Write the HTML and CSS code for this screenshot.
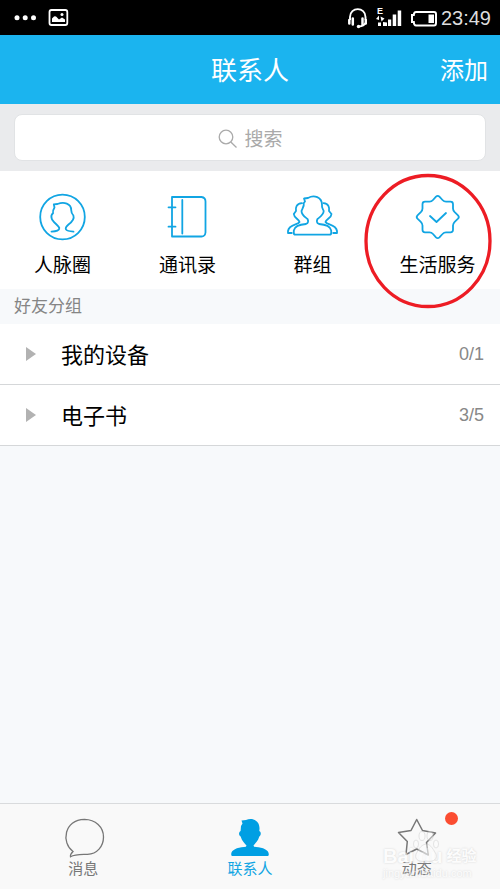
FILE: index.html
```html
<!DOCTYPE html>
<html lang="zh-CN">
<head>
<meta charset="utf-8">
<meta name="viewport" content="width=device-width, initial-scale=1">
<title>联系人</title>
<link rel="stylesheet" href="styles.css">
</head>
<body>
<div class="status">
  <svg class="status-left" width="60" height="20" viewBox="12 8 60 20" aria-hidden="true">
    <g fill="#fff"><circle cx="17" cy="17.7" r="2.5"/><circle cx="25.2" cy="17.7" r="2.5"/><circle cx="33.5" cy="17.7" r="2.5"/></g>
    <rect x="49.5" y="10" width="17.8" height="15" rx="2" fill="none" stroke="#fff" stroke-width="1.8"/>
    <path d="M52 22V18.5L54 16.5Q56 15.5 57.5 18L59 19.5L62 17.5L65 19.5V22Z" fill="#fff"/><circle cx="62" cy="14.5" r="1.5" fill="#fff"/>
  </svg>
  <div class="status-right">
    <svg width="20" height="22" viewBox="347 7 20 22" fill="none" stroke="#fff" aria-hidden="true">
      <path d="M350 20V17C350 6.500 365.500 6.500 365.500 17V20M365.500 23Q364 26 359 26.500" stroke-width="1.900"/>
      <path d="M349.300 20V23.500M352.800 18.500V24.500M362.500 18.500V24.500M365.800 20V23.500" stroke-width="2.500" stroke-linecap="round"/>
      <circle cx="358.500" cy="26.500" r="1.700" fill="#fff" stroke="none"/>
    </svg>
    <span class="signal"><span class="network">E</span>
      <svg width="27" height="22" viewBox="375 7 27 22" fill="#fff" aria-hidden="true">
        <path d="M376 19L379 15.500V20ZM380.500 16.500L384.500 18.500L381.500 21.500ZM378 22.500H381V26H378ZM383 22L387 22.500V26H383ZM388 19.500H391.200V26H388ZM392.700 14.500H396.200V26H392.700ZM397.700 10.500H401.200V26H397.700Z"/>
      </svg>
    </span>
    <svg width="28" height="22" viewBox="409 7 28 22" aria-hidden="true">
      <path d="M415 12H433Q435 12 435 14V23Q435 25.500 433 25.500H415Q413 25.500 412.800 22H411V15H412.800Q413 12 415 12Z" fill="none" stroke="#fff" stroke-width="2"/>
      <path d="M427.500 14.500H433V23H427.500Z" fill="#fff"/>
    </svg>
    <time class="clock">23:49</time>
  </div>
</div>
<header class="header">
  <h1 class="title">联系人</h1>
  <button class="add" type="button">添加</button>
</header>
<main class="content">
  <div class="search-band">
    <label class="search">
      <svg width="20" height="20" viewBox="0 0 20 20" fill="none" stroke="#aaa" stroke-width="1.300" aria-hidden="true"><circle cx="8" cy="8" r="6.800"/><path d="M12.800 13L18.500 18.500"/></svg>
      <input class="search-input" type="text" placeholder="搜索" aria-label="搜索">
    </label>
  </div>
  <nav class="shortcuts">
    <a class="shortcut" href="#">
      <svg class="shortcut-icon" viewBox="36 190 54 54" aria-hidden="true"><circle cx="62.500" cy="217" r="22.300"/><path d="M51.500 231.600C56.500 231.500 59.500 230.500 59.300 228C58.800 225.500 52.500 222 51.700 218.500C50.800 216 51.500 214.500 53 213.300C52.700 210.500 53.500 209 54.500 207.500L53.800 204.300L57.500 204C64 201.500 71.200 203.500 71.200 210Q71.200 213 73.400 215.500C74.500 218.500 72.500 221.500 68.500 224.500C64 228.500 64.500 231.300 73.500 231.600"/></svg>
      人脉圈
    </a>
    <a class="shortcut" href="#">
      <svg class="shortcut-icon" viewBox="161 190 54 54" aria-hidden="true"><path d="M172 197H201.500Q205.500 197.500 205.500 201.500V232.500Q205 236.500 201.500 236.500H172ZM182.300 200V233.500M168.500 207.300H175.500M168.500 226.700H175.500"/></svg>
      通讯录
    </a>
    <a class="shortcut" href="#">
      <svg class="shortcut-icon" viewBox="286 190 54 54" aria-hidden="true"><path d="M304 198.500L308 198C314 194.500 322 197 322 205C321.500 208 323 209 323.700 211C323.500 215 320 217 317.500 219C316.500 221 316.500 223 319 224C326 224.500 330.500 226.500 331.200 230.500V233Q331.200 234.700 329.500 234.700H295.500Q293.800 234.700 293.800 233V230.500C294.500 226.500 299 224.500 306 224C308.500 223 308.500 221 307.500 219C305 217 301.500 215 301.500 211C302 209 304.500 206 303.800 203L305 201.500Z"/><path d="M302 203.200C296 203.500 295.500 208 296 211L293.800 214C294 218 299 219 299.500 222C298 225 289 224 288 231V233H291.800"/><path d="M323.500 203.200C329 203.500 329.500 208 329 211L331.500 214C331.500 218 326 219 325.500 222C327 225 336 224 337 231V233H333.200"/></svg>
      群组
    </a>
    <a class="shortcut" href="#">
      <svg class="shortcut-icon" viewBox="411 190 54 54" aria-hidden="true"><path d="M436 196.700Q437.700 195 439.400 196.700L442.500 200Q444 201.700 446 201.700H450.500Q453 201.700 453 204.200V208.500Q453 210.500 454.700 212.200L458 215.300Q459.700 217 458 218.700L454.700 221.800Q453 223.500 453 225.500V229.800Q453 232.300 450.500 232.300H446Q444 232.300 442.500 234L439.400 237.300Q437.700 239 436 237.300L433 234Q431.500 232.300 429.500 232.300H425Q422.500 232.300 422.500 229.800V225.500Q422.500 223.500 420.800 221.800L417.500 218.700Q415.800 217 417.500 215.300L420.800 212.200Q422.500 210.500 422.500 208.500V204.200Q422.500 201.700 425 201.700H429.500Q431.500 201.700 433 200Z"/><path d="M430 216L436.500 222L446 213"/></svg>
      生活服务
    </a>
    <svg class="highlight" width="128" height="136" viewBox="0 0 128 136" fill="none" aria-hidden="true"><ellipse cx="64" cy="68" rx="62" ry="65.500" stroke="#ed1c24" stroke-width="3.300"/></svg>
  </nav>
  <h2 class="section">好友分组</h2>
  <ul class="groups">
    <li><button class="group" type="button"><span class="arrow"></span><span class="group-name">我的设备</span><span class="count">0/1</span></button></li>
    <li><button class="group" type="button"><span class="arrow"></span><span class="group-name">电子书</span><span class="count">3/5</span></button></li>
  </ul>
</main>
<nav class="tabs">
  <a class="tab" href="#">
    <svg class="tab-icon" viewBox="61 816 44 44" fill="none" stroke="#777" stroke-width="1.300" aria-hidden="true"><path d="M73 851.500C61 843 64 819.500 84.500 819.300C95.500 819.500 103.500 827 103.500 837C103.500 846.500 97 854 87.500 854.300C80 854.500 75 854 70.500 856.800Q70 854.500 73 851.500Z"/></svg>
    消息
  </a>
  <a class="tab tab-current" href="#" aria-current="page">
    <svg class="tab-icon" viewBox="228 816 44 44" fill="#009fe3" aria-hidden="true"><path d="M241.500 820.500L246 820C252 817.500 260 820 259.500 829L259.300 831C261.500 832 261 835.500 259.300 836.500C258 841 256 842.500 253.500 845.500Q253.500 847 256 847C263 847.500 269 850 268.800 854.500Q268.700 856 267.500 856H232.500Q231.200 856 231.200 854.500C231 850 237 847.500 244 847Q246.500 847 246.500 845.500C244 842.500 242 841 240.700 836.500C238.500 835 238.500 832.500 240.600 831L241 826L242.500 823.500Z"/></svg>
    联系人
  </a>
  <a class="tab" href="#">
    <svg class="tab-icon" viewBox="395 816 44 44" fill="none" stroke="#777" stroke-width="1.500" stroke-linejoin="round" aria-hidden="true"><path d="M416.700 819.500L422.500 830.500L435.500 833L426.500 842.500L428.300 855L416.700 849L406 854.500L407.300 841.500L398.500 832.500L411 830.500Z"/></svg>
    动态
    <span class="dot"></span>
  </a>
  <div class="watermark" aria-hidden="true">
    <svg class="paw" width="28" height="32" viewBox="0 0 28 32"><ellipse cx="10" cy="5" rx="3" ry="4.500"/><ellipse cx="18" cy="5" rx="3" ry="4.500"/><ellipse cx="4" cy="13" rx="2.500" ry="4"/><ellipse cx="24" cy="13" rx="2.500" ry="4"/><path d="M14 13C8 14 6 20 4 23C2 30 9 31 14 30C19 31 26 30 24 23C22 20 19 13 14 13Z"/></svg>
    <div class="mark-brand"><span>Bai</span><span>du</span><span class="mark-cn">经验</span></div>
    <div class="mark-site">jingyan.baidu.com</div>
  </div>
</nav>
</body>
</html>
```

FILE: styles.css
```css
* { box-sizing: border-box; }

body {
  margin: 0;
  min-height: 100vh;
  display: flex;
  flex-direction: column;
  background: #f7f9fb;
  color: #000;
  font-family: "Liberation Sans", "Noto Sans CJK SC", sans-serif;
}

svg { display: block; flex: none; }
a { color: inherit; text-decoration: none; }
button { border: 0; padding: 0; background: none; color: inherit; font: inherit; }

.status {
  display: flex;
  align-items: center;
  justify-content: space-between;
  height: 35px;
  padding: 0 9px 0 12px;
  background: #000;
  color: #fff;
}
.status-right { display: flex; align-items: center; gap: 8px; }
.signal { position: relative; }
.network {
  position: absolute;
  top: 0;
  left: 2px;
  font-size: 9px;
  line-height: 9px;
  font-weight: bold;
}
.clock { margin-left: -5px; color: #ddd; font-size: 20px; line-height: 36px; }

.header {
  display: grid;
  grid-template-columns: 1fr auto 1fr;
  align-items: center;
  height: 69px;
  padding: 0 12px 2px;
  background: #1bb4ef;
  color: #fff;
}
.title { grid-column: 2; margin: 0; font-size: 26px; font-weight: 400; }
.add { justify-self: end; font-size: 24px; }

.content { flex: 1; }
.search-band { padding: 10px 14px; height: 67px; background: #eaebed; }
.search {
  display: flex;
  align-items: center;
  justify-content: center;
  gap: 7px;
  height: 47px;
  padding: 2px 0 0 2px;
  border: 1px solid #e1e3e5;
  border-radius: 8px;
  background: #fff;
}
.search-input {
  width: 40px;
  padding: 2px 0 0;
  border: 0;
  outline: 0;
  background: none;
  color: #555;
  font: inherit;
  font-size: 19px;
}
.search-input::placeholder { color: #aaa; opacity: 1; }

.shortcuts {
  position: relative;
  display: grid;
  grid-template-columns: repeat(4, 1fr);
  height: 118px;
  padding-top: 19px;
  background: #fff;
}
.shortcut {
  display: flex;
  flex-direction: column;
  align-items: center;
  gap: 8px;
  font-size: 19px;
  line-height: 28px;
}
.shortcut-icon {
  width: 54px;
  height: 54px;
  fill: none;
  stroke: #11a5e3;
  stroke-width: 1.8;
  stroke-linecap: round;
  stroke-linejoin: round;
}
.highlight { position: absolute; top: 2px; right: 8px; z-index: 1; }

.section {
  margin: 0;
  padding: 0 14px;
  color: #858585;
  font-size: 17px;
  font-weight: 400;
  line-height: 35px;
}
.groups { margin: 0; padding: 0; list-style: none; }
.group {
  display: flex;
  align-items: center;
  width: 100%;
  height: 61px;
  padding: 0 16px 0 26px;
  border-bottom: 1px solid #d5d7d9;
  background: #fff;
  text-align: left;
}
.arrow {
  border-left: 10px solid #b2b2b2;
  border-top: 7px solid transparent;
  border-bottom: 7px solid transparent;
}
.group-name { flex: 1; padding: 0 0 3px 25px; font-size: 22px; }
.count { padding-top: 1px; color: #888; font-size: 18px; }

.tabs {
  position: relative;
  display: grid;
  grid-template-columns: repeat(3, 1fr);
  height: 86px;
  padding-top: 12px;
  border-top: 1px solid #d9dbdd;
  background: #f9f9f9;
}
.tab {
  position: relative;
  display: flex;
  flex-direction: column;
  align-items: center;
  color: #777;
  font-size: 15px;
  line-height: 18px;
}
.tab-current { color: #11a5e3; }
.tab-icon { width: 44px; height: 44px; }
.dot {
  position: absolute;
  top: -4px;
  left: calc(50% + 28px);
  width: 13px;
  height: 13px;
  border-radius: 50%;
  background: #fb4d31;
}

.watermark {
  position: absolute;
  right: 27px;
  bottom: 10px;
  width: 90px;
  color: #fff;
  text-shadow: 0 0 2px #bbb;
  white-space: nowrap;
  opacity: 0.6;
}
.mark-brand {
  display: flex;
  align-items: center;
  gap: 4px;
  font-size: 20px;
  line-height: 22px;
  font-weight: bold;
}
.mark-cn { font-size: 15px; }
.mark-site { font-size: 11px; line-height: 12px; }
.paw { position: absolute; top: -14px; left: 29px; fill: #fff; fill-opacity: 0.7; stroke: #ccc; stroke-width: 0.8; }
```
